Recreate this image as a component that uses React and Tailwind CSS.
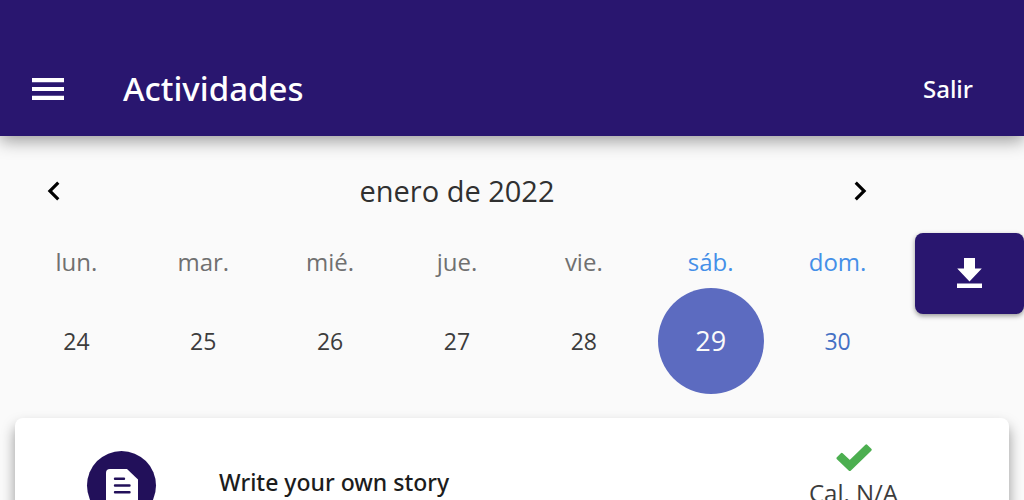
import { MdChevronLeft, MdChevronRight } from "react-icons/md";

const days = [
  { name: "lun.", date: 24 },
  { name: "mar.", date: 25 },
  { name: "mié.", date: 26 },
  { name: "jue.", date: 27 },
  { name: "vie.", date: 28 },
  { name: "sáb.", date: 29, weekend: true, selected: true },
  { name: "dom.", date: 30, weekend: true },
];

function dateClass(day) {
  if (day.selected) return "bg-[#5c6bc0] text-[27px] text-[#fafafa]";
  if (day.weekend) return "text-[23px] text-[#4470c4]";
  return "text-[23px] text-[#3c3c3c]";
}

function MenuIcon() {
  return (
    <svg viewBox="0 0 32 22" className="h-[22px] w-8" fill="currentColor" aria-hidden="true">
      <path d="M0 0H32V4.200H0ZM0 8.900H32V13.100H0ZM0 17.800H32V22H0Z" />
    </svg>
  );
}

function DownloadIcon() {
  return (
    <svg viewBox="0 0 26 32" className="h-8 w-[26px]" fill="currentColor" aria-hidden="true">
      <path d="M7 0H18V10.500H24.800L12.500 23.500L0.200 10.500H7ZM0 25.500H25V30H0Z" />
    </svg>
  );
}

function DocumentIcon() {
  return (
    <svg viewBox="0 0 32 34" className="h-[34px] w-8" aria-hidden="true">
      <path d="M4 0H21L32 10.500V30a4 4 0 0 1-4 4H4a4 4 0 0 1-4-4V4a4 4 0 0 1 4-4Z" fill="#fff" />
      <path d="M9 9.800H18M9 16.500H23.500M9 23.300H23.500" stroke="#22105a" strokeWidth="2.400" strokeLinecap="round" />
    </svg>
  );
}

function CheckIcon() {
  return (
    <svg viewBox="0 0 36 28" className="h-7 w-9" aria-hidden="true">
      <path
        d="M1.800 14.200L5.800 10.200L13.800 17.600L30.300 1.700L34.400 5.700L13.800 25.700Z"
        fill="#4caf50"
        stroke="#4caf50"
        strokeWidth="2.600"
        strokeLinejoin="round"
      />
    </svg>
  );
}

function Header() {
  return (
    <header className="relative flex items-center bg-[#29166f] px-8 pt-[43px] pb-px text-white shadow-[0_5px_16px_rgba(0,0,0,0.38)]">
      <button type="button" aria-label="Menú" className="flex h-[92px] items-center">
        <MenuIcon />
      </button>
      <h1 className="ml-[59px] flex-1 font-['Noto_Sans',sans-serif] text-[33px] leading-[48px] font-medium">
        Actividades
      </h1>
      <button type="button" className="px-[19px] font-['Noto_Sans',sans-serif] text-2xl font-medium">
        Salir
      </button>
    </header>
  );
}

function Calendar() {
  return (
    <section className="flex-1 pl-[13px]">
      <div className="flex h-[74px] items-center justify-between px-[22px]">
        <button type="button" aria-label="Semana anterior">
          <MdChevronLeft className="size-[38px] text-black" />
        </button>
        <h2 className="text-[29px] leading-10 text-[#303030]">enero de 2022</h2>
        <button type="button" aria-label="Semana siguiente">
          <MdChevronRight className="size-[38px] text-black" />
        </button>
      </div>
      <table className="w-full table-fixed text-center">
        <thead>
          <tr>
            {days.map((day) => (
              <th
                key={day.name}
                scope="col"
                className={`h-[60px] p-0 pt-2 text-2xl font-normal ${day.weekend ? "text-[#448fe8]" : "text-[#707070]"}`}
              >
                {day.name}
              </th>
            ))}
          </tr>
        </thead>
        <tbody>
          <tr>
            {days.map((day) => (
              <td key={day.date} className="p-0">
                <button
                  type="button"
                  aria-pressed={Boolean(day.selected)}
                  className={`mx-auto flex size-[106px] items-center justify-center rounded-full ${dateClass(day)}`}
                >
                  {day.date}
                </button>
              </td>
            ))}
          </tr>
        </tbody>
      </table>
    </section>
  );
}

function ActivityCard() {
  return (
    <article className="mx-[15px] mt-6 flex h-40 items-start rounded-lg bg-white shadow-[0_8px_14px_rgba(0,0,0,0.4)]">
      <div className="mt-[33px] ml-[72px] flex size-[69px] items-center justify-center rounded-full bg-[#22105a]">
        <DocumentIcon />
      </div>
      <h3 className="mt-12 ml-[63px] flex-1 font-['Noto_Sans',sans-serif] text-[23px] leading-8 font-medium text-[#1c1c1c]">
        Write your own story
      </h3>
      <div className="mt-[26px] flex w-[311px] flex-col items-center gap-[5px]">
        <CheckIcon />
        <span className="text-2xl text-[#3c3c3c]">Cal. N/A</span>
      </div>
    </article>
  );
}

export default function App() {
  return (
    <div className="h-screen overflow-hidden bg-[#fafafa] font-['Open_Sans','Noto_Sans',sans-serif]">
      <Header />
      <main>
        <div className="flex items-start pt-[18px]">
          <Calendar />
          <button
            type="button"
            aria-label="Descargar"
            className="mt-[79px] ml-[14px] flex h-[81px] w-[109px] items-center justify-center rounded-lg bg-[#29166f] text-white shadow-[0_2px_5px_rgba(0,0,0,0.4)]"
          >
            <DownloadIcon />
          </button>
        </div>
        <ActivityCard />
      </main>
    </div>
  );
}
